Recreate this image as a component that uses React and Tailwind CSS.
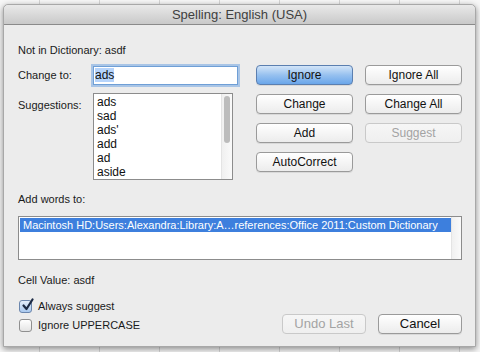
import React from "react";

const font = { fontFamily: '"Liberation Sans", Arial, sans-serif' };

function Btn({ children, variant = "normal", className = "" }) {
  const base =
    "h-[20px] rounded-[4px] flex items-center justify-center text-[12px] border shadow-[0_1px_0_rgba(0,0,0,0.08)]";
  const styles = {
    normal:
      "border-[#9a9a9a] bg-gradient-to-b from-[#ffffff] to-[#ececec] text-[#111]",
    primary:
      "border-[#5b7fb0] bg-gradient-to-b from-[#d3e5f8] via-[#97c1ef] to-[#6aa6ea] text-[#111]",
    disabled:
      "border-[#c9c9c9] bg-gradient-to-b from-[#f6f6f6] to-[#efefef] text-[#a3a3a3] shadow-none",
  };
  return <div className={`${base} ${styles[variant]} ${className}`}>{children}</div>;
}

function Checkbox({ checked, label }) {
  return (
    <div className="flex items-center h-[19px] gap-[6px]">
      <div
        className={`w-[13px] h-[13px] rounded-[3px] border relative ${
          checked
            ? "border-[#6b86ad] bg-gradient-to-b from-[#e3eefb] to-[#a9c8ee]"
            : "border-[#8f8f8f] bg-gradient-to-b from-[#ffffff] to-[#e4e4e4]"
        }`}
      >
        {checked && (
          <svg
            viewBox="0 0 14 14"
            className="absolute left-[1px] top-[-3px] w-[14px] h-[14px]"
          >
            <path
              d="M2.5 7.5 L5.5 11 L11.5 1.5"
              fill="none"
              stroke="#1c2a44"
              strokeWidth="2.2"
              strokeLinecap="round"
              strokeLinejoin="round"
            />
          </svg>
        )}
      </div>
      <span className="text-[11px] text-[#1a1a1a]">{label}</span>
    </div>
  );
}

export default function App() {
  const suggestions = ["ads", "sad", "ads'", "add", "ad", "aside"];
  return (
    <div
      className="w-[480px] h-[352px] overflow-hidden relative bg-[#f7f7f7]"
      style={{
        ...font,
        backgroundImage:
          "repeating-linear-gradient(90deg, transparent 0 39px, #d6d6d6 39px 40px, transparent 40px 60px)",
      }}
    >
      <div className="absolute left-[3px] top-[4px] w-[473px] h-[343px] rounded-t-[5px] bg-[#ececec] shadow-[0_2px_6px_rgba(0,0,0,0.45)] flex flex-col border border-[#a8a8a8]">
        <div className="h-[20px] shrink-0 rounded-t-[5px] bg-gradient-to-b from-[#e9e9e9] to-[#c9c9c9] border-b border-[#8a8a8a] flex items-center justify-center">
          <span className="text-[13px] text-[#404040]">Spelling: English (USA)</span>
        </div>
        <div className="flex-1 flex flex-col pl-[14px] pr-[13px]">
          <div className="mt-[18px] h-[14px] flex items-center text-[11px] text-[#1a1a1a]">
            Not in Dictionary: asdf
          </div>
          <div className="mt-[8px] flex">
            <div className="w-[220px] flex flex-col">
              <div className="flex items-center h-[20px]">
                <span className="w-[75px] text-[11px] text-[#1a1a1a]">Change to:</span>
                <div className="w-[145px] h-[19px] bg-white border border-[#6f9fd6] shadow-[0_0_0_2px_rgba(115,165,225,0.55)] flex items-center px-[1px]">
                  <span className="text-[12px] bg-[#b6d4fb] text-[#111] leading-[14px]">ads</span>
                </div>
              </div>
              <div className="flex mt-[8px]">
                <span className="w-[75px] text-[11px] text-[#1a1a1a] mt-[4px]">Suggestions:</span>
                <div className="w-[140px] h-[87px] bg-white border border-[#8c8c8c] flex">
                  <div className="flex-1 flex flex-col pl-[3px] pt-[1px]">
                    {suggestions.map((s) => (
                      <div key={s} className="h-[14px] leading-[14px] text-[12px] text-[#111]">
                        {s}
                      </div>
                    ))}
                  </div>
                  <div className="w-[11px] bg-gradient-to-r from-[#f0f0f0] to-[#fafafa] border-l border-[#e4e4e4] pt-[2px] flex justify-center">
                    <div className="w-[6px] h-[47px] rounded-[3px] bg-[#bcbcbc]" />
                  </div>
                </div>
              </div>
            </div>
            <div className="ml-[18px] grid grid-cols-[97px_97px] gap-x-[12px] gap-y-[9px] content-start">
              <Btn variant="primary">Ignore</Btn>
              <Btn>Ignore All</Btn>
              <Btn>Change</Btn>
              <Btn>Change All</Btn>
              <Btn>Add</Btn>
              <Btn variant="disabled">Suggest</Btn>
              <Btn>AutoCorrect</Btn>
            </div>
          </div>
          <div className="mt-[12px] h-[14px] flex items-center text-[11px] text-[#1a1a1a]">
            Add words to:
          </div>
          <div className="mt-[10px] h-[44px] bg-white border border-[#8c8c8c] flex">
            <div className="flex-1 pt-[1px] pl-[1px]">
              <div className="h-[14px] bg-[#3d7fdd] text-white text-[11px] leading-[14px] pl-[3px]">
                Macintosh HD:Users:Alexandra:Library:A…references:Office 2011:Custom Dictionary
              </div>
            </div>
            <div className="w-[10px] bg-gradient-to-r from-[#f0f0f0] to-[#fafafa] border-l border-[#e4e4e4]" />
          </div>
          <div className="mt-[13px] h-[14px] flex items-center text-[11px] text-[#1a1a1a]">
            Cell Value: asdf
          </div>
          <div className="mt-[10px] flex items-start">
            <div className="flex flex-col pl-[1px]">
              <Checkbox checked label="Always suggest" />
              <Checkbox label="Ignore UPPERCASE" />
            </div>
            <div className="ml-auto mt-[17px] flex gap-[12px]">
              <Btn variant="disabled" className="w-[84px] text-[13px]">Undo Last</Btn>
              <Btn className="w-[84px] text-[13px]">Cancel</Btn>
            </div>
          </div>
        </div>
      </div>
    </div>
  );
}
